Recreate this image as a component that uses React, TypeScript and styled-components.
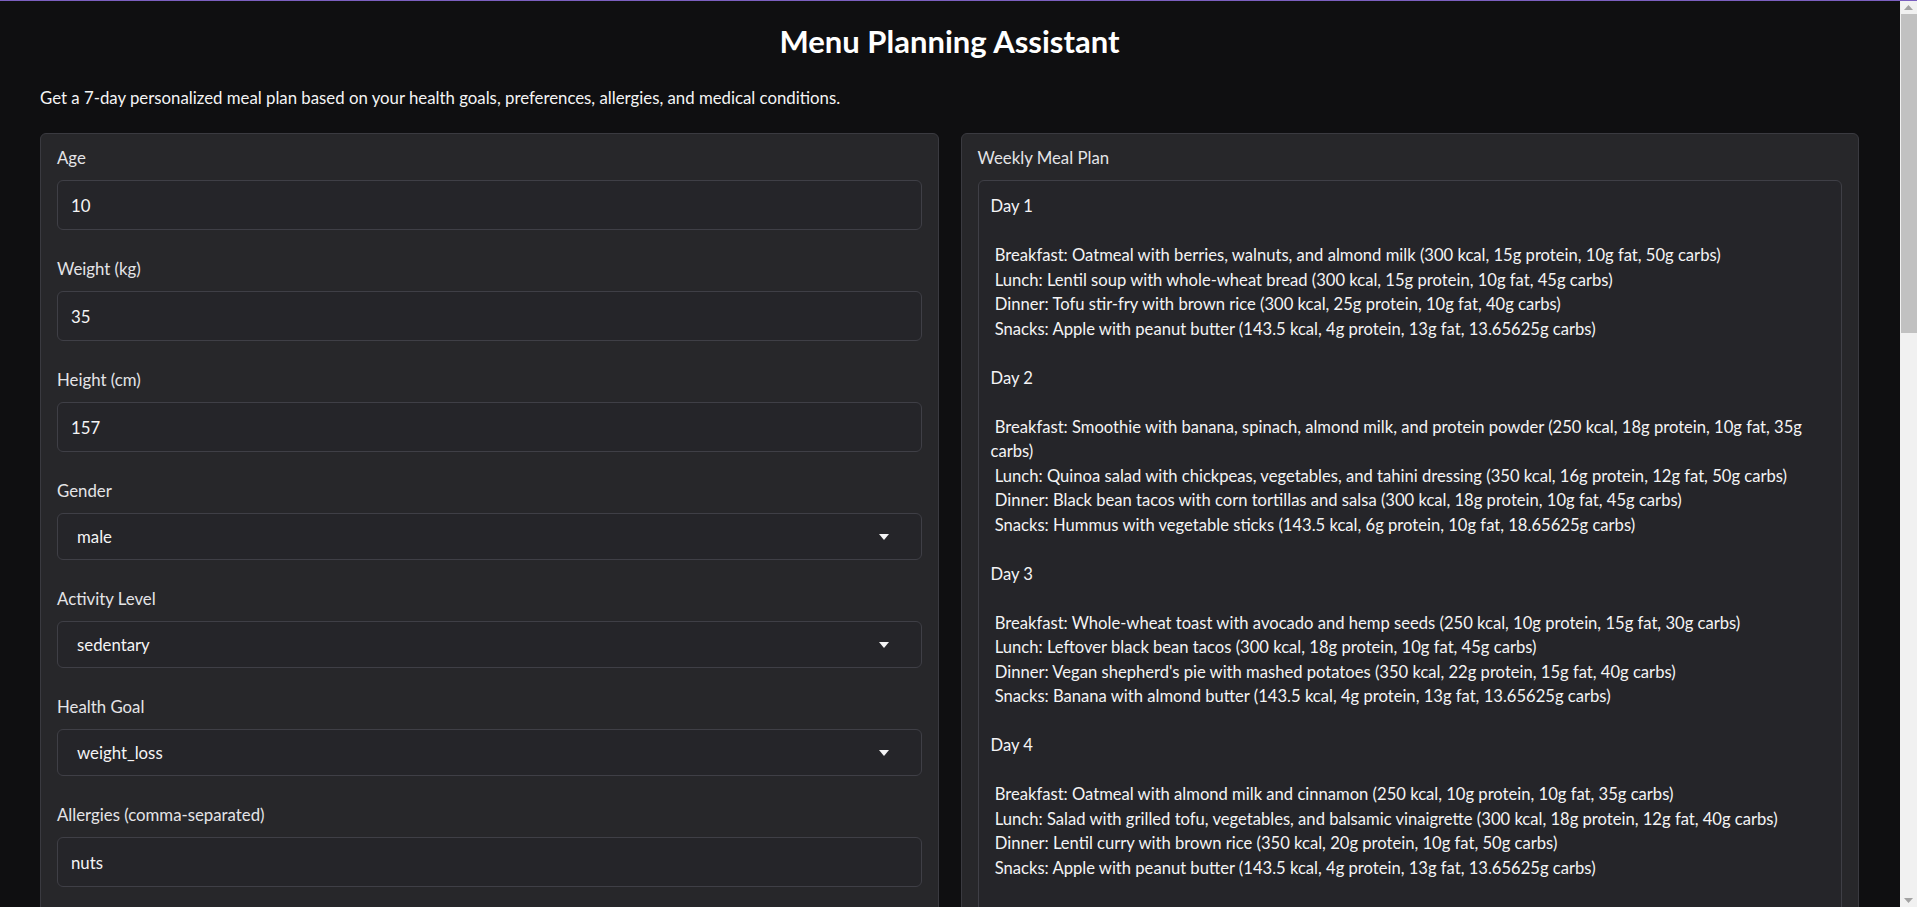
import React from "react";
import styled, { createGlobalStyle } from "styled-components";

const GlobalStyle = createGlobalStyle`
  body {
    margin: 0;
    background: #0f0f11;
    font-family: Lato, "Noto Sans", sans-serif;
    color: #f4f4f5;
  }
`;

interface Field {
  label: string;
  value: string;
  select?: boolean;
}

const fields: Field[] = [
  { label: "Age", value: "10" },
  { label: "Weight (kg)", value: "35" },
  { label: "Height (cm)", value: "157" },
  { label: "Gender", value: "male", select: true },
  { label: "Activity Level", value: "sedentary", select: true },
  { label: "Health Goal", value: "weight_loss", select: true },
  { label: "Allergies (comma-separated)", value: "nuts" },
  { label: "Medical Conditions (comma-separated)", value: "" },
  { label: "Dietary Preferences", value: "vegan", select: true },
];

const mealPlan = `Day 1

 Breakfast: Oatmeal with berries, walnuts, and almond milk (300 kcal, 15g protein, 10g fat, 50g carbs)
 Lunch: Lentil soup with whole-wheat bread (300 kcal, 15g protein, 10g fat, 45g carbs)
 Dinner: Tofu stir-fry with brown rice (300 kcal, 25g protein, 10g fat, 40g carbs)
 Snacks: Apple with peanut butter (143.5 kcal, 4g protein, 13g fat, 13.65625g carbs)

Day 2

 Breakfast: Smoothie with banana, spinach, almond milk, and protein powder (250 kcal, 18g protein, 10g fat, 35g carbs)
 Lunch: Quinoa salad with chickpeas, vegetables, and tahini dressing (350 kcal, 16g protein, 12g fat, 50g carbs)
 Dinner: Black bean tacos with corn tortillas and salsa (300 kcal, 18g protein, 10g fat, 45g carbs)
 Snacks: Hummus with vegetable sticks (143.5 kcal, 6g protein, 10g fat, 18.65625g carbs)

Day 3

 Breakfast: Whole-wheat toast with avocado and hemp seeds (250 kcal, 10g protein, 15g fat, 30g carbs)
 Lunch: Leftover black bean tacos (300 kcal, 18g protein, 10g fat, 45g carbs)
 Dinner: Vegan shepherd's pie with mashed potatoes (350 kcal, 22g protein, 15g fat, 40g carbs)
 Snacks: Banana with almond butter (143.5 kcal, 4g protein, 13g fat, 13.65625g carbs)

Day 4

 Breakfast: Oatmeal with almond milk and cinnamon (250 kcal, 10g protein, 10g fat, 35g carbs)
 Lunch: Salad with grilled tofu, vegetables, and balsamic vinaigrette (300 kcal, 18g protein, 12g fat, 40g carbs)
 Dinner: Lentil curry with brown rice (350 kcal, 20g protein, 10g fat, 50g carbs)
 Snacks: Apple with peanut butter (143.5 kcal, 4g protein, 13g fat, 13.65625g carbs)

Day 5

 Breakfast: Chia pudding with coconut milk and mango (250 kcal, 8g protein, 12g fat, 30g carbs)
 Lunch: Chickpea wrap with spinach and hummus (350 kcal, 15g protein, 12g fat, 45g carbs)
 Dinner: Vegetable curry with quinoa (300 kcal, 14g protein, 10g fat, 42g carbs)
 Snacks: Carrot sticks with hummus (143.5 kcal, 5g protein, 8g fat, 15.65625g carbs)

Day 6

 Breakfast: Tofu scramble with vegetables (250 kcal, 18g protein, 12g fat, 15g carbs)
 Lunch: Black bean soup with whole-grain crackers (300 kcal, 16g protein, 8g fat, 45g carbs)
 Dinner: Whole-wheat pasta with marinara and lentils (350 kcal, 20g protein, 8g fat, 55g carbs)
 Snacks: Orange with sunflower seeds (143.5 kcal, 4g protein, 9g fat, 14.65625g carbs)

Day 7

 Breakfast: Buckwheat pancakes with berries (250 kcal, 8g protein, 6g fat, 42g carbs)
 Lunch: Stuffed bell peppers with rice and beans (300 kcal, 14g protein, 8g fat, 48g carbs)
 Dinner: Tempeh stir-fry with vegetables and brown rice (350 kcal, 24g protein, 12g fat, 40g carbs)
 Snacks: Pear with soy yogurt (143.5 kcal, 5g protein, 4g fat, 22.65625g carbs)`;

function Caret() {
  return (
    <svg width="10" height="6" viewBox="0 0 10 6">
      <path d="M0 0 H10 L5 6 Z" fill="#f4f4f5" />
    </svg>
  );
}

function RailArrow({ down }: { down?: boolean }) {
  return (
    <svg width="9" height="5" viewBox="0 0 9 5">
      <path d={down ? "M0 0 H9 L4.5 5 Z" : "M0 5 H9 L4.5 0 Z"} fill="#a3a3a3" />
    </svg>
  );
}

export default function App() {
  return (
    <>
      <GlobalStyle />
      <Window>
        <Page>
          <Title>Menu Planning Assistant</Title>
          <Description>
            Get a 7-day personalized meal plan based on your health goals, preferences, allergies,
            and medical conditions.
          </Description>
          <Columns>
            <Panel>
              {fields.map((field) => (
                <FieldBlock key={field.label}>
                  <Label>{field.label}</Label>
                  {field.select ? (
                    <SelectBox>
                      <span>{field.value}</span>
                      <Caret />
                    </SelectBox>
                  ) : (
                    <Input readOnly value={field.value} />
                  )}
                </FieldBlock>
              ))}
              <SubmitButton>Generate Meal Plan</SubmitButton>
            </Panel>
            <Panel>
              <Label>Weekly Meal Plan</Label>
              <Output readOnly value={mealPlan} />
            </Panel>
          </Columns>
        </Page>
        <ScrollRail>
          <RailButton>
            <RailArrow />
          </RailButton>
          <RailThumb />
          <RailButton $bottom>
            <RailArrow down />
          </RailButton>
        </ScrollRail>
      </Window>
    </>
  );
}

const Window = styled.div`
  box-sizing: border-box;
  display: flex;
  height: 100vh;
  border-top: 1px solid #7b5fc0;
`;

const Page = styled.main`
  flex: 1;
  min-width: 0;
  overflow-y: auto;
  scrollbar-width: none;
  padding: 18px 41px 50px 40px;
`;

const ScrollRail = styled.div`
  width: 17px;
  flex-shrink: 0;
  display: flex;
  flex-direction: column;
  background: #f1f1f1;
`;

const RailButton = styled.div<{ $bottom?: boolean }>`
  height: 13px;
  display: flex;
  align-items: center;
  justify-content: center;
  margin-top: ${(p) => (p.$bottom ? "auto" : "0")};
`;

const RailThumb = styled.div`
  height: 319px;
  margin-left: 1px;
  background: #c1c1c1;
`;

const Title = styled.h1`
  margin: 0;
  font-size: 31px;
  line-height: 44px;
  font-weight: 700;
  text-align: center;
  color: #ffffff;
`;

const Description = styled.p`
  margin: 23px 0 23px;
  font-size: 16.8px;
  line-height: 24px;
  color: #f4f4f5;
`;

const Columns = styled.div`
  display: grid;
  grid-template-columns: 1fr 1fr;
  gap: 22px;
  align-items: start;
`;

const Panel = styled.section`
  display: flex;
  flex-direction: column;
  padding: 15px 16px 16px;
  background: #27272a;
  border: 1px solid #3a3a40;
  border-radius: 6px;
`;

const FieldBlock = styled.div`
  display: flex;
  flex-direction: column;
  & + & {
    margin-top: 30px;
  }
`;

const Label = styled.span`
  display: block;
  font-size: 16.8px;
  line-height: 18px;
  margin-bottom: 13px;
  color: #e4e4e7;
`;

const Input = styled.input`
  box-sizing: border-box;
  height: 50px;
  padding: 0 13px;
  background: #252529;
  border: 1px solid #3f3f46;
  border-radius: 6px;
  font-family: inherit;
  font-size: 16.8px;
  color: #f4f4f5;
  outline: none;
`;

const SelectBox = styled.div`
  box-sizing: border-box;
  height: 47px;
  display: flex;
  align-items: center;
  justify-content: space-between;
  padding: 0 32px 0 19px;
  background: #252529;
  border: 1px solid #3f3f46;
  border-radius: 6px;
  font-size: 16.8px;
  color: #f4f4f5;
`;

const SubmitButton = styled.button`
  margin-top: 30px;
  height: 46px;
  border: none;
  border-radius: 6px;
  background: #f97316;
  color: #ffffff;
  font-family: inherit;
  font-size: 17px;
  font-weight: 700;
`;

const Output = styled.textarea`
  box-sizing: border-box;
  height: 2230px;
  padding: 13px 12px 12px;
  background: #252529;
  border: 1px solid #3f3f46;
  border-radius: 6px;
  font-family: inherit;
  font-size: 16.6px;
  line-height: 24.5px;
  color: #f4f4f5;
  resize: none;
  outline: none;
  overflow: hidden;
`;
